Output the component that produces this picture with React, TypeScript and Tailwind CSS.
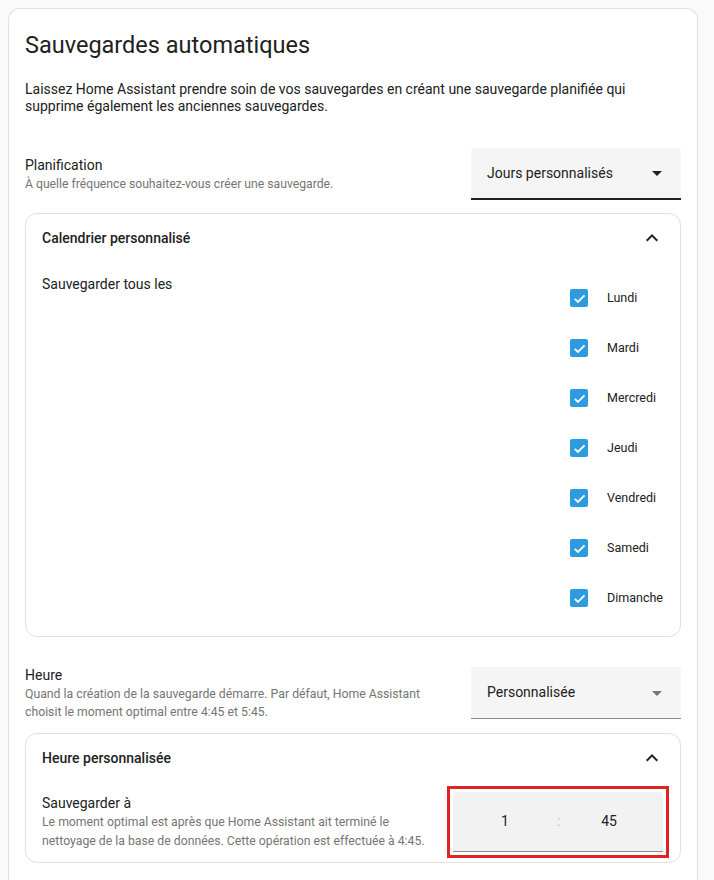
import React from "react";

const DAYS = ["Lundi", "Mardi", "Mercredi", "Jeudi", "Vendredi", "Samedi", "Dimanche"];

function ChevronUp() {
  return (
    <svg viewBox="0 0 24 24" className="size-6 text-[#212121]" fill="currentColor">
      <path d="M7.41,15.41L12,10.83L16.59,15.41L18,14L12,8L6,14L7.41,15.41Z" />
    </svg>
  );
}

function MenuDown({ muted }: { muted?: boolean }) {
  return (
    <svg
      viewBox="0 0 24 24"
      className={muted ? "size-6 text-[#757575]" : "size-6 text-[#212121]"}
      fill="currentColor"
    >
      <path d="M7,10L12,15L17,10H7Z" />
    </svg>
  );
}

function Checkbox() {
  return (
    <span className="flex size-[18px] items-center justify-center rounded-[2px] bg-[#2d9be0]">
      <svg viewBox="0 0 24 24" className="size-[15px]" fill="none" stroke="white" strokeWidth={3}>
        <path d="M4.5 12.5l5 5L20 7" />
      </svg>
    </span>
  );
}

function Select({ value, focused }: { value: string; focused?: boolean }) {
  return (
    <div
      className={
        focused
          ? "flex h-[52px] w-[210px] shrink-0 items-center justify-between rounded-t-[4px] border-b-2 border-[#212121] bg-[#f5f5f5] pl-4 pr-3"
          : "flex h-[52px] w-[210px] shrink-0 items-center justify-between rounded-t-[4px] border-b border-[#8a8a8a] bg-[#f5f5f5] pl-4 pr-3"
      }
    >
      <span className="text-[14px] text-[#212121]">{value}</span>
      <MenuDown muted={!focused} />
    </div>
  );
}

export default function App() {
  return (
    <div
      className="min-h-[880px] bg-[#fafafa] pl-2 pt-2"
      style={{ fontFamily: "Roboto, 'Liberation Sans', sans-serif" }}
    >
      <div className="w-[690px] rounded-t-xl border border-b-0 border-[#e0e0e0] bg-white px-4 pb-6">
        <h1 className="pt-[20px] text-[23.5px] leading-8 text-[#212121]">Sauvegardes automatiques</h1>

        <p className="mt-[20px] text-[14px] leading-[17px] text-[#212121]">
          Laissez Home Assistant prendre soin de vos sauvegardes en créant une sauvegarde planifiée qui
          supprime également les anciennes sauvegardes.
        </p>

        <div className="mt-[33px] flex items-center justify-between">
          <div className="flex flex-col">
            <span className="text-[14px] leading-5 text-[#212121]">Planification</span>
            <span className="text-[12.2px] leading-[18px] text-[#757575]">
              À quelle fréquence souhaitez-vous créer une sauvegarde.
            </span>
          </div>
          <Select value="Jours personnalisés" focused />
        </div>

        <div className="mt-[13px] rounded-xl border border-[#e0e0e0]">
          <div className="flex h-[48px] items-center justify-between px-4">
            <span className="text-[14px] font-medium text-[#212121]">Calendrier personnalisé</span>
            <ChevronUp />
          </div>
          <div className="flex justify-between px-4 pb-[13px]">
            <span className="pt-[12px] text-[14px] leading-5 text-[#212121]">Sauvegarder tous les</span>
            <div className="flex w-[94px] flex-col pt-[11px]">
              {DAYS.map((d) => (
                <div key={d} className="flex h-[50px] items-center gap-[19px]">
                  <Checkbox />
                  <span className="text-[12.5px] text-[#212121]">{d}</span>
                </div>
              ))}
            </div>
          </div>
        </div>

        <div className="mt-[28px] flex items-center justify-between">
          <div className="flex w-[410px] flex-col">
            <span className="text-[14px] leading-5 text-[#212121]">Heure</span>
            <span className="text-[12.25px] leading-[18px] text-[#757575]">
              Quand la création de la sauvegarde démarre. Par défaut, Home Assistant choisit le moment
              optimal entre 4:45 et 5:45.
            </span>
          </div>
          <Select value="Personnalisée" />
        </div>

        <div className="mt-[12px] rounded-xl border border-[#e0e0e0]">
          <div className="flex h-[48px] items-center justify-between px-4">
            <span className="text-[14px] font-medium text-[#212121]">Heure personnalisée</span>
            <ChevronUp />
          </div>
          <div className="flex items-center justify-between pb-[4px] pl-4 pr-[11px] pt-[4px]">
            <div className="flex w-[385px] flex-col">
              <span className="text-[14px] leading-5 text-[#212121]">Sauvegarder à</span>
              <span className="text-[12.25px] leading-[19px] text-[#757575]">
                Le moment optimal est après que Home Assistant ait terminé le nettoyage de la base de
                données. Cette opération est effectuée à 4:45.
              </span>
            </div>
            <div className="border-[3px] border-[#e02424] p-[3px]">
              <div className="flex h-[60px] w-[210px] items-center rounded-t-[4px] border-b border-[#8a8a8a] bg-[#f2f2f2] text-[14px] text-[#212121]">
                <span className="w-[104px] text-center">1</span>
                <span className="w-[2px] text-[#bdbdbd]">:</span>
                <span className="w-[100px] text-center">45</span>
              </div>
            </div>
          </div>
        </div>
      </div>
    </div>
  );
}
